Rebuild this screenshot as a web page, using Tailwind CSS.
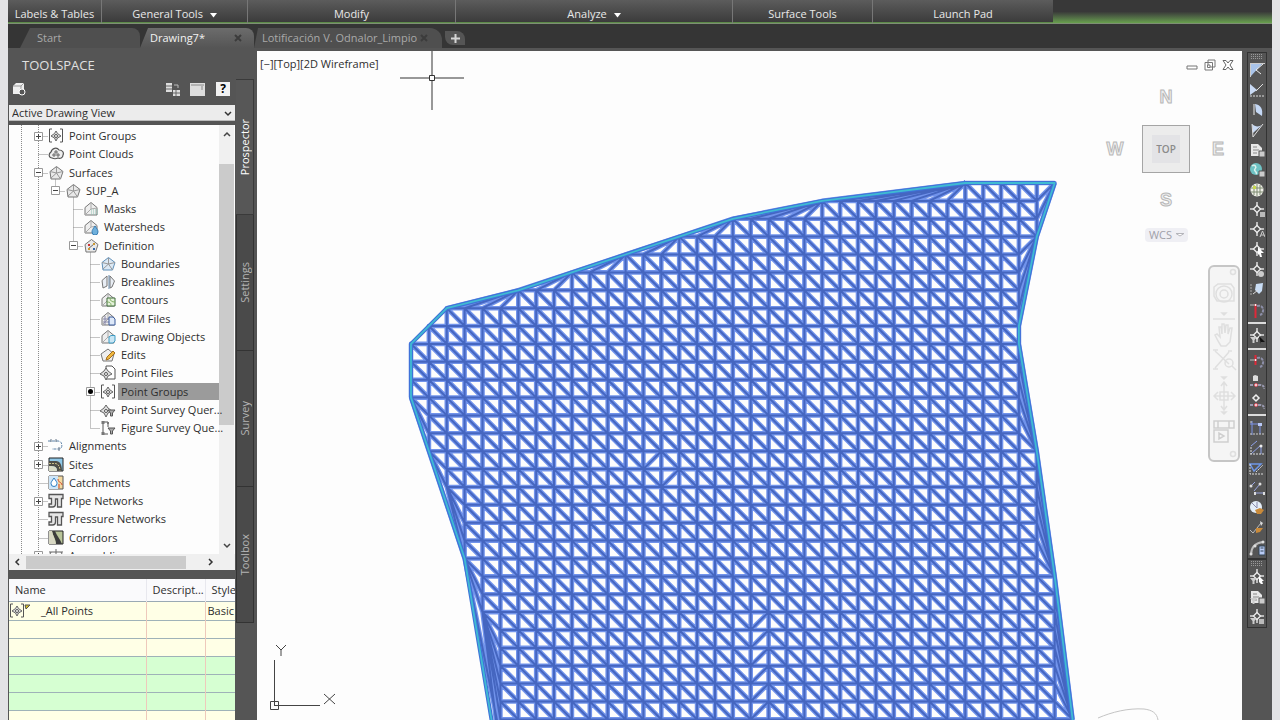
<!DOCTYPE html>
<html lang="en">
<head>
  <meta charset="UTF-8" />
  <meta name="viewport" content="width=device-width, initial-scale=1.0" />
  <title>Drawing7</title>
  <script src="https://cdn.jsdelivr.net/npm/@tailwindcss/browser@4"></script>
</head>
<body class="font-['Open_Sans','Noto_Sans',sans-serif] text-[11px] leading-4 text-[#2e2e2e]">
  <div class="flex flex-col h-screen min-h-[640px] overflow-hidden border-x-8 border-[#e3e3e5] bg-[#555]">

    <!-- Ribbon -->
    <header class="flex shrink-0 h-6 bg-linear-to-b from-[#383838] from-50% to-[#68a04d] border-b border-[#7d8f74] text-[11px] text-[#e8e8e8]">
      <div class="flex items-end justify-center w-[94px] h-[23px] border-r border-[#777] bg-linear-to-b from-[#5c5c5c] to-[#3a3a3a]"><span class="w-full text-center whitespace-nowrap border-b border-[#5c8a48]">Labels &amp; Tables</span></div>
      <div class="flex items-end justify-center w-[146px] h-[23px] border-r border-[#777] bg-linear-to-b from-[#5c5c5c] to-[#3a3a3a]"><button class="w-full border-b border-[#5c8a48]">General Tools <svg class="inline ml-1" width="7" height="5"><path d="M0 0h7L3.500 4.500z" fill="#fff"/></svg></button></div>
      <div class="flex items-end justify-center w-[208px] h-[23px] border-r border-[#777] bg-linear-to-b from-[#5c5c5c] to-[#3a3a3a]"><span class="w-full text-center border-b border-[#5c8a48]">Modify</span></div>
      <div class="flex items-end justify-center w-[277px] h-[23px] border-r border-[#777] bg-linear-to-b from-[#5c5c5c] to-[#3a3a3a]"><button class="w-full border-b border-[#5c8a48]">Analyze <svg class="inline ml-1" width="7" height="5"><path d="M0 0h7L3.500 4.500z" fill="#fff"/></svg></button></div>
      <div class="flex items-end justify-center w-[140px] h-[23px] border-r border-[#777] bg-linear-to-b from-[#5c5c5c] to-[#3a3a3a]"><span class="w-full text-center border-b border-[#5c8a48]">Surface Tools</span></div>
      <div class="flex items-end justify-center w-[180px] h-[23px] bg-linear-to-b from-[#5c5c5c] to-[#3a3a3a]"><span class="w-full text-center border-b border-[#5c8a48]">Launch Pad</span></div>
    </header>

    <!-- File tabs -->
    <nav class="flex items-end shrink-0 h-[27px] pl-3 bg-[#353535] border-b-3 border-[#555] text-[11px] text-[#a9a9a9]">
      <button class="w-[120px] h-5 pl-[17px] text-left bg-[#4f4f4f] rounded-tr-lg [clip-path:polygon(10px_0,100%_0,100%_100%,0_100%)]">Start</button>
      <button class="flex items-center justify-between w-[114px] h-5 pl-[10px] pr-3 text-[#f2f2f2] bg-linear-to-b from-[#6c6c6c] to-[#555] rounded-tr-lg [clip-path:polygon(8px_0,100%_0,100%_100%,0_100%)]">Drawing7* <svg width="8" height="8" stroke="#3c3c3c" stroke-width="2"><path d="M1 1l6 6M7 1 1 7"/></svg></button>
      <button class="flex items-center justify-between w-[188px] h-5 pl-[8px] pr-[14px] bg-[#4f4f4f] rounded-tr-xl [clip-path:polygon(4px_0,100%_0,100%_100%,0_100%)]">Lotificación V. Odnalor_Limpio <svg width="8" height="8" stroke="#3c3c3c" stroke-width="2"><path d="M1 1l6 6M7 1 1 7"/></svg></button>
      <button aria-label="New tab" class="flex items-center justify-center w-5 h-[14px] ml-[3px] mb-[3px] bg-[#555] rounded-tr-lg rounded-bl-lg"><svg width="9" height="9" stroke="#d5d5d5" stroke-width="2"><path d="M4.500 0v9M0 4.500h9"/></svg></button>
    </nav>

    <div class="flex flex-1 min-h-0">
      <!-- Toolspace -->
      <aside class="flex flex-col w-[228px] shrink-0">
        <h1 class="h-[30px] pl-[14px] text-[13px] leading-7 text-[#e0e0e0]">TOOLSPACE</h1>
        <div class="flex items-center h-[24px] pl-1 pr-[6px] pb-2">
          <button aria-label="New item"><svg width="14" height="14"><path d="M1 4l3-3h8v8l-3 3H1z" fill="#eee"/><path d="M1 4h8l3-3M9 4v8" stroke="#999" fill="none"/><circle cx="10" cy="10" r="3" fill="#555" stroke="#fff"/></svg></button>
          <button aria-label="Toggle tree" class="ml-auto"><svg width="16" height="15"><path d="M1 1h6v9H1zM8 8h7v6H8z" fill="#ddd"/><path d="M1 4h6M1 7h6M8 11h7M11 8v6" stroke="#666"/><path d="M9 3h4v3" fill="none" stroke="#bbb"/></svg></button>
          <button aria-label="Panorama" class="ml-[9px]"><svg width="15" height="13"><path d="M0 0h15v13H0z" fill="#ddd"/><path d="M1 2h13M12 3v4" stroke="#888"/></svg></button>
          <button aria-label="Help" class="ml-[11px] w-[14px] h-[14px] bg-[#f1f1f1] text-[12px] leading-[14px] font-bold text-black">?</button>
        </div>
        <div class="relative mx-px">
          <select aria-label="View" class="block appearance-none w-full h-4 px-[3px] bg-[#ececec] text-[11px] leading-4 border-b border-[#bbb]"><option>Active Drawing View</option></select>
          <svg class="absolute right-[3px] top-[6px]" width="8" height="6" fill="none" stroke="#333" stroke-width="1.500"><path d="M1 1l3 3 3-3"/></svg>
        </div>

        <div class="flex shrink-0 h-[429px] mx-px mt-[4px] bg-[#fdfdfd] overflow-hidden">
          <div class="relative flex-1 min-w-0 pt-[2px]">
            <svg id="branches" class="absolute left-0 top-0 w-full h-[440px] stroke-[#8a8a8a]" stroke-dasharray="1 1" fill="none"></svg>
            <ul id="tree" class="relative grid grid-cols-1 auto-rows-fr h-[438px]"></ul>
          </div>
          <div class="flex flex-col items-center w-[15px] bg-[#f0f0f0] mr-px">
            <svg class="mt-[6px]" width="8" height="6" fill="none" stroke="#444" stroke-width="1.500"><path d="M1 5l3-3 3 3"/></svg>
            <div class="w-full h-[261px] mt-[27px] bg-[#cbcbcb]"></div>
            <svg class="mt-auto mb-[5px]" width="8" height="6" fill="none" stroke="#444" stroke-width="1.500"><path d="M1 1l3 3 3-3"/></svg>
          </div>
        </div>
        <div class="flex items-center shrink-0 h-4 mx-px pl-[5px] bg-[#f0f0f0]">
          <svg width="6" height="8" fill="none" stroke="#333" stroke-width="1.500"><path d="M5 1L2 4l3 3"/></svg>
          <div class="w-[160px] h-[13px] ml-[6px] bg-[#cbcbcb]"></div>
          <svg class="ml-[22px]" width="6" height="8" fill="none" stroke="#333" stroke-width="1.500"><path d="M1 1l3 3-3 3"/></svg>
        </div>

        <!-- Item list -->
        <div class="flex-1 min-h-0 mt-[9px] mx-px bg-[#ffffe6] overflow-hidden">
          <table class="w-full table-fixed border-collapse text-left">
            <thead class="bg-[#fafafc]">
              <tr class="h-[22px] border-b border-[#9aa9b4]">
                <th class="w-[137px] pl-[6px] font-normal border-r border-[#e8e8ee]">Name</th>
                <th class="w-[59px] pl-[6px] font-normal border-r border-[#e8e8ee] whitespace-nowrap">Descript...</th>
                <th class="pl-[6px] font-normal">Style</th>
              </tr>
            </thead>
            <tbody id="items"></tbody>
          </table>
        </div>
      </aside>

      <!-- Toolspace tabs -->
      <div class="w-[21px] shrink-0 pt-[28px] text-[11px] text-[#b4b4b4]">
        <button class="flex items-center justify-center w-[18px] h-[136px] border border-[#3a3a3a] border-l-0 bg-[#575757] text-white"><span class="[writing-mode:vertical-rl] rotate-180">Prospector</span></button>
        <button class="flex items-center justify-center w-[18px] h-[136px] border border-t-0 border-[#333] bg-[#4a4a4a]"><span class="[writing-mode:vertical-rl] rotate-180">Settings</span></button>
        <button class="flex items-center justify-center w-[18px] h-[136px] border border-t-0 border-[#333] bg-[#4a4a4a]"><span class="[writing-mode:vertical-rl] rotate-180">Survey</span></button>
        <button class="flex items-center justify-center w-[18px] h-[136px] border border-t-0 border-[#333] bg-[#4a4a4a]"><span class="[writing-mode:vertical-rl] rotate-180">Toolbox</span></button>
      </div>

      <!-- Drawing area -->
      <main class="relative flex-1 min-w-0 bg-[#fdfdfd] overflow-hidden">
        <svg class="absolute inset-0 size-full" fill="none">
          <g transform="translate(-257 -51)">
            <g stroke-linejoin="round">
              <path id="mesh-halo" stroke="#4e78e6" stroke-opacity="0.800" stroke-width="4.600"/>
              <path id="mesh" stroke="#4566c0" stroke-width="2"/>
              <path id="border-halo" stroke="#3f72d8" stroke-width="4"/>
              <path id="border" stroke="#3fbbd2" stroke-width="1.800"/>
            </g>
            <path d="M432 51v24M432 81v29M400 78h29M435 78h29" stroke="#777" stroke-width="1.500"/>
            <path d="M429.500 75.500h5v5h-5z" stroke="#333"/>
            <path d="M274.500 660v46M274 705.500h46M270.500 701.500h8v8h-8z" stroke="#444"/>
            <path d="M276 645l5 5 5-5M281 650v6M324 694l11 10M335 694l-11 10" stroke="#444"/>
            <path d="M1098 718c14-6 30-10 46-9 8 1 13 4 14 11" stroke="#c4c4c4"/>
          </g>
        </svg>
        <div class="absolute left-[3px] top-[5px]">[−][Top][2D Wireframe]</div>

        <div class="absolute right-[8px] top-[8px] flex items-center gap-[6px]">
          <button aria-label="Minimize"><svg width="12" height="12"><path d="M1 7h10v3H1z" fill="#fff" stroke="#777"/></svg></button>
          <button aria-label="Restore"><svg width="12" height="12" fill="#fff" stroke="#777"><path d="M4 1h7v7H4zM1 3.500h7.500V11H1z"/><path d="M3.500 6h2.500v2.500H3.500z"/></svg></button>
          <button aria-label="Close"><svg width="12" height="12"><path d="M1 1.500h3l2 2.500 2-2.500h3L8 6l3 4.500H8L6 8l-2 2.500H1L4 6z" fill="#fff" stroke="#666"/></svg></button>
        </div>

        <!-- View cube -->
        <div class="absolute right-[14px] top-[36px] grid grid-cols-[24px_1fr_24px] grid-rows-[20px_83px_20px] w-[124px] items-center justify-items-center">
          <svg class="col-start-2" width="20" height="20"><text x="10" y="16" text-anchor="middle" class="font-['Liberation_Sans',sans-serif] font-bold text-[18px] fill-[#eee] stroke-[#b8b8b8]">N</text></svg>
          <svg class="col-start-1 row-start-2" width="24" height="20"><text x="11" y="16" text-anchor="middle" class="font-['Liberation_Sans',sans-serif] font-bold text-[18px] fill-[#eee] stroke-[#b8b8b8]">W</text></svg>
          <button class="row-start-2 col-start-2 flex items-center justify-center size-12 border border-[#a5a5a5] bg-[#ececec]"><span class="size-7 leading-7 bg-[#e3e3e6] font-semibold text-[10px] text-[#8b8b8b]">TOP</span></button>
          <svg class="row-start-2 col-start-3" width="24" height="20"><text x="14" y="16" text-anchor="middle" class="font-['Liberation_Sans',sans-serif] font-bold text-[18px] fill-[#eee] stroke-[#b8b8b8]">E</text></svg>
          <svg class="row-start-3 col-start-2" width="20" height="20"><text x="10" y="16" text-anchor="middle" class="font-['Liberation_Sans',sans-serif] font-bold text-[18px] fill-[#eee] stroke-[#b8b8b8]">S</text></svg>
        </div>
        <button class="absolute right-[54px] top-[177px] flex items-center justify-center gap-1 w-[43px] h-[14px] rounded bg-[#efeff4] text-[11px] text-[#a0a0a8]">WCS <svg width="8" height="5" fill="#fff" stroke="#b5b5bb"><path d="M0 .5h8L4 3z"/></svg></button>

        <!-- Navigation bar -->
        <div class="absolute right-[2px] top-[214px] w-8 h-[197px] border-2 border-[#c6c6c6] rounded-md bg-[#f5f5f5]">
          <svg width="28" height="193" fill="none" stroke="#dfdfdf" stroke-width="1.500">
            <circle cx="23" cy="5" r="2.500"/><circle cx="23" cy="187" r="2.500"/>
            <path d="M8 17h13l3 4v13H7l-3-5V20z"/><circle cx="14" cy="27" r="8"/><circle cx="14" cy="27" r="4"/>
            <path d="M3 52h22M12 46h4l-2 2zM12 110h4l-2 2zM12 145h4l-2 2z"/>
            <path d="M8 74l-3-6 2-1 3 3-1-10h2l1 7V57h2l1 9 1-8h2v9l2-6h2l-2 14-4 4h-5z"/>
            <path d="M5 84l14 13M5 101l14-16M3 83h5M18 84h4M3 102h5"/><circle cx="19" cy="96" r="4"/><path d="M22 99l4 4"/>
            <path d="M14 116v26M4 129h21M11 119l3-4 3 4M11 139l3 4 3-4M8 125l-4 4 4 4M21 125l4 4-4 4M10 125h8v8h-8z"/>
            <path d="M4 154h20v7H4zM8 154v7M19 154v7M4 163h14v12H4zM9 166v6l5-3z" stroke="#cfcfcf"/>
          </svg>
        </div>
      </main>

      <!-- Right toolbars -->
      <aside class="w-[30px] shrink-0 pt-px px-[5px]">
        <div id="bar1" class="flex flex-col items-center border border-[#333]"></div>
        <div id="bar2" class="flex flex-col items-center border border-[#333]"></div>
      </aside>
    </div>
  </div>

  <script>
    // ---- tree ----
    const pent = '<path d="M2 6.500 8.500 1.500 15 6.500 12.500 14H3z" fill="#e9e9e9" stroke="#777"/>';
    const star = '<path d="M8.500 2v6L3 13M8.500 8l4 6M2 6.500 8.500 8 15 6.500" stroke="#999" fill="none"/>';
    const house = '<path d="M2 14V6.500L8 1.500l6 5V14z" fill="#eee" stroke="#777"/><path d="M8 2v6l-6 6M8 8l6-1" stroke="#aaa" fill="none"/>';
    const smallTarget = '<path d="M6 3l2 3 4 3-4 2-2 4-2-4-4-2 4-3z" fill="#ddd" stroke="#666"/><circle cx="6" cy="9" r="1.500" fill="#fff" stroke="#555"/>';
    const bracket = '<path d="M4 1H1.500v13H4M12 1h2.500v13H12" fill="none" stroke="#555"/><path d="M8 3l1.500 2.500L13 8l-3.500 2L8 13l-1.500-3L3 8l3.500-2.500z" fill="#ddd" stroke="#666"/><circle cx="8" cy="8" r="1.500" fill="#fff" stroke="#555"/>';
    const pipes = '<path d="M1 1.500h14v4h-1.500V14H9.500V6H7.500v5c0 2-1 3-3 3H1v-3h2.500V5.500H1z" fill="#e6e6e6" stroke="#555" stroke-width="1.300"/>';
    const icons = {
      groups: bracket,
      clouds: '<path d="M4 12C1 12 0 8 3 6c1-4 6-5 8-2 4 0 5 3 4 5 0 3-3 4-5 3-2 1-4 1-6 0z" fill="#eee" stroke="#555" stroke-width="1.200"/><path d="M5 8h2v2H5zM9 8h2v2H9zM7 5h2v2H7z" fill="none" stroke="#666"/>',
      surface: pent + star,
      masks: house + '<path d="M8 9h8M8 11h8M8 13h8" stroke="#8fc4b4" stroke-dasharray="1 1"/>',
      watersheds: house + '<path d="M12 7c2 3 3 4 3 6a3 3 0 01-6 0c0-2 1-3 3-6z" fill="#6fb0dc" stroke="#3a7fb5"/>',
      definition: pent + '<path d="M5 11l6-5" stroke="#666"/><path d="M5 6h2v2H5z" fill="#c33"/><path d="M10 10h2v2h-2z" fill="#36a"/><path d="M10 5h2v2h-2zM5 10h2v2H5z" fill="#c93"/>',
      boundaries: '<path d="M2 6.500 8.500 1.500 15 6.500 12.500 14H3z" fill="#dce9f5" stroke="#5f8fb8"/>' + star,
      breaklines: '<path d="M7 2 2 6.500 3 14l4-2zM10 2l4.500 5L12 13l-2 1z" fill="#e9eef5" stroke="#777"/><path d="M9 1v14" stroke="#68a"/>',
      contours: house + '<path d="M7 6h8v8H7z" fill="#e4f2da" stroke="#3f6b3a"/><path d="M7 10c4 0 4 2 4 4M10 6c0 3 2 4 5 4" fill="none" stroke="#7fae62"/>',
      dem: house + '<path d="M3 8h6M3 11h6M5 5v9" stroke="#88a"/><path d="M9 6h4l2 2v6H9z" fill="#dde8f8" stroke="#3a5a9a"/>',
      objects: house + '<path d="M9 8l2-1.500h4V12l-2 2H9z" fill="#c9e6f4" stroke="#3f9cc4"/>',
      edits: '<path d="M1 7l7-5 6 5-2 7H3z" fill="#eee" stroke="#777"/><path d="M6 13l1-3 6-6 2 2-6 6z" fill="#f0b840" stroke="#a47020"/>',
      files: '<path d="M6 1h6l3 3v10H6z" fill="#fff" stroke="#555"/>' + smallTarget,
      ptquery: smallTarget + '<path d="M8 8h7l-2.500 3v3h-2v-3z" fill="#aaa" stroke="#555"/>',
      figquery: '<path d="M3 2v12M3 2h5v5M3 14h5" fill="none" stroke="#555"/><path d="M1.500 1h3v3h-3zM7 2h2v2H7zM1.500 12h3v3h-3z" fill="#777"/><path d="M8 8h7l-2.500 3v3h-2v-3z" fill="#aaa" stroke="#555"/>',
      alignments: '<path d="M0 3h10c5 0 5 8 1 8H4" fill="none" stroke="#5f83a8" stroke-dasharray="3 1"/><path d="M3 1v3M8 1v3M11 9v4" stroke="#678"/>',
      sites: '<path d="M1 1h14v13H1z" fill="#8fc8e8" stroke="#222"/><path d="M1 4h7c4 0 6 4 6 10H9c0-4-2-5-8-5z" fill="#4e4e48"/><path d="M1 6.500h6c3 0 5 3 5 7" fill="none" stroke="#c9c08a" stroke-dasharray="2 1"/><path d="M1 9c6 0 8 1 8 5H1z" fill="#d9dcc8"/>',
      catchments: '<path d="M1 1h14v13H1z" fill="#f3d9a0" stroke="#555"/><path d="M1 1h9v13H1z" fill="#cfe6f8"/><path d="M6 3c2 3 3 4 3 5.500a3 3 0 01-6 0C3 7 4 6 6 3z" fill="#fff" stroke="#2d7cc0"/><path d="M10 4c0 4 4 3 4 6M11 13V9" stroke="#d2452c" fill="none"/>',
      pipe: pipes,
      corridors: '<path d="M1 1h14v13H1z" fill="#b9c59a" stroke="#222"/><path d="M4 1h3c2 5 5 8 7 13H8C8 9 5 6 4 1z" fill="#3d3d3d"/><path d="M1 1h3c1 5 3 8 4 13H1z" fill="#d8d8c4"/>',
      assemblies: '<path d="M8 1v12M1 4h14M3 4l-2 4M13 4l2 4" stroke="#666" fill="none"/>'
    };
    // [level, toggle, icon, label]
    const nodes = [
      [0, '+', 'groups', 'Point Groups'], [0, '', 'clouds', 'Point Clouds'], [0, '-', 'surface', 'Surfaces'],
      [1, '-', 'surface', 'SUP_A'], [2, '', 'masks', 'Masks'], [2, '', 'watersheds', 'Watersheds'],
      [2, '-', 'definition', 'Definition'], [3, '', 'boundaries', 'Boundaries'], [3, '', 'breaklines', 'Breaklines'],
      [3, '', 'contours', 'Contours'], [3, '', 'dem', 'DEM Files'], [3, '', 'objects', 'Drawing Objects'],
      [3, '', 'edits', 'Edits'], [3, '', 'files', 'Point Files'], [3, 'o', 'groups', 'Point Groups'],
      [3, '', 'ptquery', 'Point Survey Quer...'], [3, '', 'figquery', 'Figure Survey Que...'],
      [0, '+', 'alignments', 'Alignments'], [0, '+', 'sites', 'Sites'], [0, '', 'catchments', 'Catchments'],
      [0, '+', 'pipe', 'Pipe Networks'], [0, '', 'pipe', 'Pressure Networks'], [0, '', 'corridors', 'Corridors'],
      [0, '+', 'assemblies', 'Assemblies']
    ];
    const indent = ['pl-[25px]', 'pl-[42px]', 'pl-[60px]', 'pl-[77px]'];
    const lineX = [29.5, 46.5, 64.5, 81.5];
    const marks = {
      '+': '<path d="M.5.5h8v8h-8z" fill="#fff" stroke="#999"/><path d="M2 4.500h5M4.500 2v5" stroke="#444"/>',
      '-': '<path d="M.5.5h8v8h-8z" fill="#fff" stroke="#999"/><path d="M2 4.500h5" stroke="#444"/>',
      'o': '<path d="M.5.5h8v8h-8z" fill="#fff" stroke="#999"/><circle cx="4.500" cy="4.500" r="2.500" fill="#000"/>',
      '': ''
    };
    document.getElementById('tree').innerHTML = nodes.map(([lvl, mark, icon, label]) => `
      <li class="flex items-center min-w-0 ${indent[lvl]}">
        <svg class="shrink-0" width="9" height="9">${marks[mark]}</svg>
        <svg class="shrink-0 ml-[5px]" width="16" height="16">${icons[icon]}</svg>
        <span class="flex-1 min-w-0 ml-[2px] pl-[3px] whitespace-nowrap ${mark === 'o' ? 'bg-[#9b9b9b] leading-[17px]' : ''}">${label}</span>
      </li>`).join('');
    const rowY = i => Math.round(2 + 18.25 * (i + 0.5)) + 0.5;
    let d = `M12.5 0V440M29.5 0V440M46.500 ${rowY(2) + 6}V${rowY(3)}M64.5 ${rowY(3) + 6}V${rowY(6)}M81.5 ${rowY(6) + 6}V${rowY(16)}`;
    nodes.forEach(([lvl], i) => { d += `M${lineX[lvl]} ${rowY(i)}h9`; });
    document.getElementById('branches').innerHTML = `<path d="${d}"/>`;

    // ---- item list ----
    const shade = ['', 'bg-[#ffffe6]', 'bg-[#ffffe6]', 'bg-[#d6ffd2]', 'bg-[#d6ffd2]', 'bg-[#d6ffd2]', 'bg-[#ffffe6]'];
    document.getElementById('items').innerHTML = shade.map((bg, i) => `
      <tr class="h-[18px] border-b border-[#9fb2b8] ${bg}">
        <td class="p-0 border-r border-[#eec9bb]">${i ? '' : `<div class="flex items-center h-[18px]"><svg width="22" height="16">${bracket}<path d="M16 2h5l-4 4z" fill="#d8c020" stroke="#555"/></svg><span class="pl-[10px]">_All Points</span></div>`}</td>
        <td class="p-0 border-r border-[#eec9bb]"></td>
        <td class="p-0 pl-[2px]">${i ? '' : 'Basic'}</td>
      </tr>`).join('');

    // ---- right toolbars ----
    const pt = '<path d="M8 0v4M8 10v4M1 7h4M11 7h4" stroke="#ddd" stroke-width="1.500"/><path d="M8 3.500 11.500 7 8 10.500 4.500 7z" fill="#555" stroke="#eee" stroke-width="1.300"/>';
    const hook = '<path d="M8 4c7-2 8 7 3 9" fill="none" stroke="#8d8fa8" stroke-width="2" stroke-dasharray="3 1"/>';
    const funnel = '<path d="M1 9h7l-2.500 3v3h-2v-3z" fill="#ccc"/>';
    const doc = '<path d="M2 2h7l4 4v8H2z" fill="#e8e8e8"/><path d="M4 5h4M4 8h6M4 11h4" stroke="#888"/>';
    const sq = '<path d="M10 9h6v6h-6z" fill="#ccc" stroke="#555"/>';
    const bend = '<path d="M1 11h10c3 0 4 1 4 4" fill="none" stroke="#9a9ab0" stroke-width="2" stroke-dasharray="3 1"/><circle cx="7" cy="11" r="1.500" fill="#fff" stroke="#e05060"/>';
    const bar1 = [
      '<path d="M1 1.500h15M1.500 2v13" stroke="#ccc"/><path d="M2 2h11L2 14z" fill="#a9c4ea"/><path d="M7 8l7-6M7 8l5 4" stroke="#eee"/>',
      '<path d="M1 14h15" stroke="#ddd" stroke-dasharray="2 1"/><path d="M1 2l7 6-7 5z" fill="#c9daf4"/><path d="M7 9l7-7" stroke="#ddd"/>',
      '<path d="M6 2c6 1 8 5 7 12L7 10z" fill="#c5d8f5"/><path d="M5 2v11" stroke="#eee"/>',
      '<path d="M3 2l1 9 9-8c-3 2-7 2-10-1z" fill="#c9daf4"/><path d="M3 2l1 13 10-13" stroke="#ddd" fill="none"/>',
      doc + sq, '<circle cx="7" cy="7" r="6" fill="#6fc3c4"/><path d="M3 4c3-2 5 1 3 3s3 3 1 5" stroke="#d9f2ee" fill="none" stroke-width="1.500"/>' + sq,
      '<circle cx="8" cy="8" r="6.500" fill="#f0f0e8"/><path d="M2 6h12M2 10h12M8 2v12M5 3v10M11 3v10" stroke="#7d8a70"/><path d="M4 4h3v3H4z" fill="#c7d84f"/>',
      pt + '<path d="M11 10h5v5h-5z" fill="#bbb"/>', pt + '<path d="M11 15l2.500-6 2.500 6M12 13h3" stroke="#ccc" fill="none"/>',
      pt + '<path d="M9 5l6 6-3 0 1 4-2 0-1-3-1 1z" fill="#fff"/>', pt + '<circle cx="12" cy="12" r="3" fill="#ccc"/>',
      '<path d="M2 2v12" stroke="#aaa" stroke-dasharray="2 1"/><path d="M7 2l7-1-1 8-3 3-4-4z" fill="#c9ddf5"/><path d="M4 12l5-4" stroke="#ddd"/>',
      '<path d="M6.500 2v14" stroke="#e02838" stroke-width="2"/><path d="M1 3h4" stroke="#bbb"/><circle cx="6.500" cy="3" r="1" fill="#fff"/>' + hook, '|',
      pt + funnel + '<path d="M10 8l6 6h-4v2z" fill="#111"/>', '|',
      '<path d="M6.500 1v10" stroke="#e02838" stroke-width="2"/><path d="M1 6h4" stroke="#bbb"/><circle cx="6.500" cy="6" r="1" fill="#fff"/>' + hook,
      '<path d="M4 2l2-1 3 1v5H4z" fill="#ddd"/>' + bend, '<path d="M7 1l3 3-3 3-3-3z" fill="none" stroke="#eee" stroke-width="1.500"/>' + bend, '|',
      '<path d="M3 1v14M1 4h12M11 4v10" stroke="#7c93e8" fill="none"/><path d="M1 14h14M1 2h3" stroke="#ccc" stroke-dasharray="2 1"/><path d="M9 3h4v3H9z" fill="#b9c8f5"/>',
      '<path d="M2 6l6-5M2 14 12 5v9" stroke="#8fa2ea" fill="none"/><path d="M1 14h15M2 7v7" stroke="#ddd" stroke-dasharray="2 1"/><circle cx="12" cy="6" r="1.500" fill="#eee"/>',
      '<path d="M1 4h11L5 11z" fill="none" stroke="#6e96e8" stroke-width="1.500"/><path d="M1 4v10h14M7 12l7-7" stroke="#ddd" fill="none" stroke-dasharray="2 1"/>',
      '<path d="M1 7l5-5M5 11l6-7M6 13h10" stroke="#9aa6e0"/><circle cx="2" cy="6" r="1.500" fill="#ddd"/><circle cx="11" cy="4" r="1.500" fill="#ddd"/><path d="M5 12h2v3H5zM14 12h2v3h-2z" fill="#ddd"/>',
      '<circle cx="7" cy="7" r="6" fill="#e4eef8"/><path d="M3 3l5 5V2" stroke="#88a" fill="none"/><path d="M6 10l5-2 4 2-3 4H8z" fill="#c98a3a"/>',
      '<path d="M1 10l3 3 8-10" stroke="#bbb" fill="none"/><path d="M7 8h7l-3 4-4 1z" fill="#c98a3a"/><path d="M11 1l3 2-2 3z" fill="#ddd"/>',
      '<path d="M2 15C2 8 6 3 14 2" stroke="#bbb" fill="none" stroke-width="2"/><circle cx="2" cy="14" r="1.500" fill="#ddd"/><circle cx="6" cy="6" r="1.500" fill="#ddd"/><circle cx="14" cy="2" r="1.500" fill="#ddd"/><path d="M10 6h6v9h-6z" fill="#b9cbf5" stroke="#345"/><path d="M11.500 8h3M11.500 11h3" stroke="#345"/>'
    ];
    const bar2 = [pt + funnel + '<path d="M10 7l5 5-2 0 1 3-2 0-2-2z" fill="#fff"/>', doc + funnel + sq, pt + funnel + '<path d="M10 10h5v5h-5z" fill="#bbb"/>'];
    const grip = '<svg class="my-px" width="14" height="5" stroke="#999" stroke-dasharray="1 1"><path d="M1 .5h12M1 2.500h12M1 4.500h12"/></svg>';
    const drawBar = list => grip + list.map(i => i === '|'
      ? '<div class="w-full h-[6px] py-[2px]"><div class="h-[2px] bg-[#dcdcdc]"></div></div>'
      : `<button class="flex items-center justify-center w-full h-5"><svg width="16" height="16">${i}</svg></button>`).join('');
    document.getElementById('bar1').innerHTML = drawBar(bar1);
    document.getElementById('bar2').innerHTML = drawBar(bar2);

    // ---- surface triangulation, in grid cells ----
    const step = 17.88, x0 = 411, y0 = 183;
    const P = (c, r) => `${(x0 + c * step).toFixed(1)} ${(y0 + r * step).toFixed(1)}`;
    const starts = [31, 23, 18, 15, 12, 9, 6, 2, 1, 0, 0, 0, 1, 1, 1, 2, 2, 3, 3, 3, 3, 4, 4, 4, 5, 5, 5, 5, 5, 5, 5, 5];
    const end = r => r < 3 ? 35 : r < 15 ? 34 : r < 22 ? 35 : 36;
    let m = '';
    starts.forEach((s, r) => {
      for (let c = s; c < end(r); c++) {
        const flip = (c === 13 && r === 15) || (c === 14 && r === 16) || (c === 19 && r >= 24);
        m += `M${P(c, r + 1)}L${P(c, r)}L${P(c + 1, r)}`;
        m += flip ? `M${P(c + 1, r)}L${P(c, r + 1)}` : `M${P(c, r)}L${P(c + 1, r + 1)}`;
      }
      m += `M${P(s, r + 1)}H${x0 + end(r) * step}V${y0 + r * step}`;
    });
    // fans between the regular grid and the outer border: apex -> points
    const fans = [
      [[31, 0], [30, 1], [29, 1], [28, 1], [27, 1], [26, 1], [25, 1], [24, 1], [23, 1]],
      [[23, 1], [22, 2], [21, 2], [20, 2], [19, 2], [18, 2]],
      [[18, 2], [17, 3], [16, 3], [15, 3]], [[15, 3], [14, 4], [13, 4], [12, 4]],
      [[12, 4], [11, 5], [10, 5], [9, 5]], [[9, 5], [8, 6], [7, 6], [6, 6]],
      [[6, 6], [5, 7], [4, 7], [3, 7], [2, 7]],
      [[36, 0], [35, 0], [35, 1], [35, 2], [35, 3]], [[35, 3], [34, 3], [34, 4], [34, 5], [34, 6], [34, 7], [34, 8]],
      [[35, 15], [34, 15], [34, 14], [34, 13], [34, 12], [34, 11], [34, 10], [34, 9]],
      [[36, 22], [35, 22], [35, 21], [35, 20], [35, 19], [35, 18], [35, 17], [35, 16], [35, 15]],
      [[37, 30], [36, 30], [36, 29], [36, 28], [36, 27], [36, 26], [36, 25], [36, 24], [36, 23], [36, 22]],
      [[0, 12], [1, 12], [1, 13], [1, 14], [1, 15]], [[1, 15], [2, 15], [2, 16], [2, 17], [3, 21]],
      [[2, 17], [3, 17], [3, 18], [3, 19], [3, 20], [3, 21]], [[3, 21], [4, 21], [4, 22], [4, 23], [4, 24], [5, 31]],
      [[4, 24], [5, 24], [5, 25], [5, 26], [5, 27], [5, 28], [5, 29], [5, 30], [5, 32]]
    ];
    fans.forEach(([a, ...pts]) => pts.forEach(p => { m += `M${P(...a)}L${P(...p)}`; }));
    const ring = [[0, 9], [2, 7], [6, 6], [9, 5], [12, 4], [15, 3], [18, 2], [23, 1], [31, 0], [36, 0], [35, 3], [34, 8], [34, 9], [35, 15], [36, 22], [37, 30], [38, 38], [5, 33], [3, 21], [1, 15], [0, 12]];
    const b = 'M' + ring.map(p => P(...p)).join('L') + 'Z';
    for (const [id, path] of [['mesh-halo', m], ['mesh', m], ['border-halo', b], ['border', b]]) {
      document.getElementById(id).setAttribute('d', path);
    }
  </script>
</body>
</html>
